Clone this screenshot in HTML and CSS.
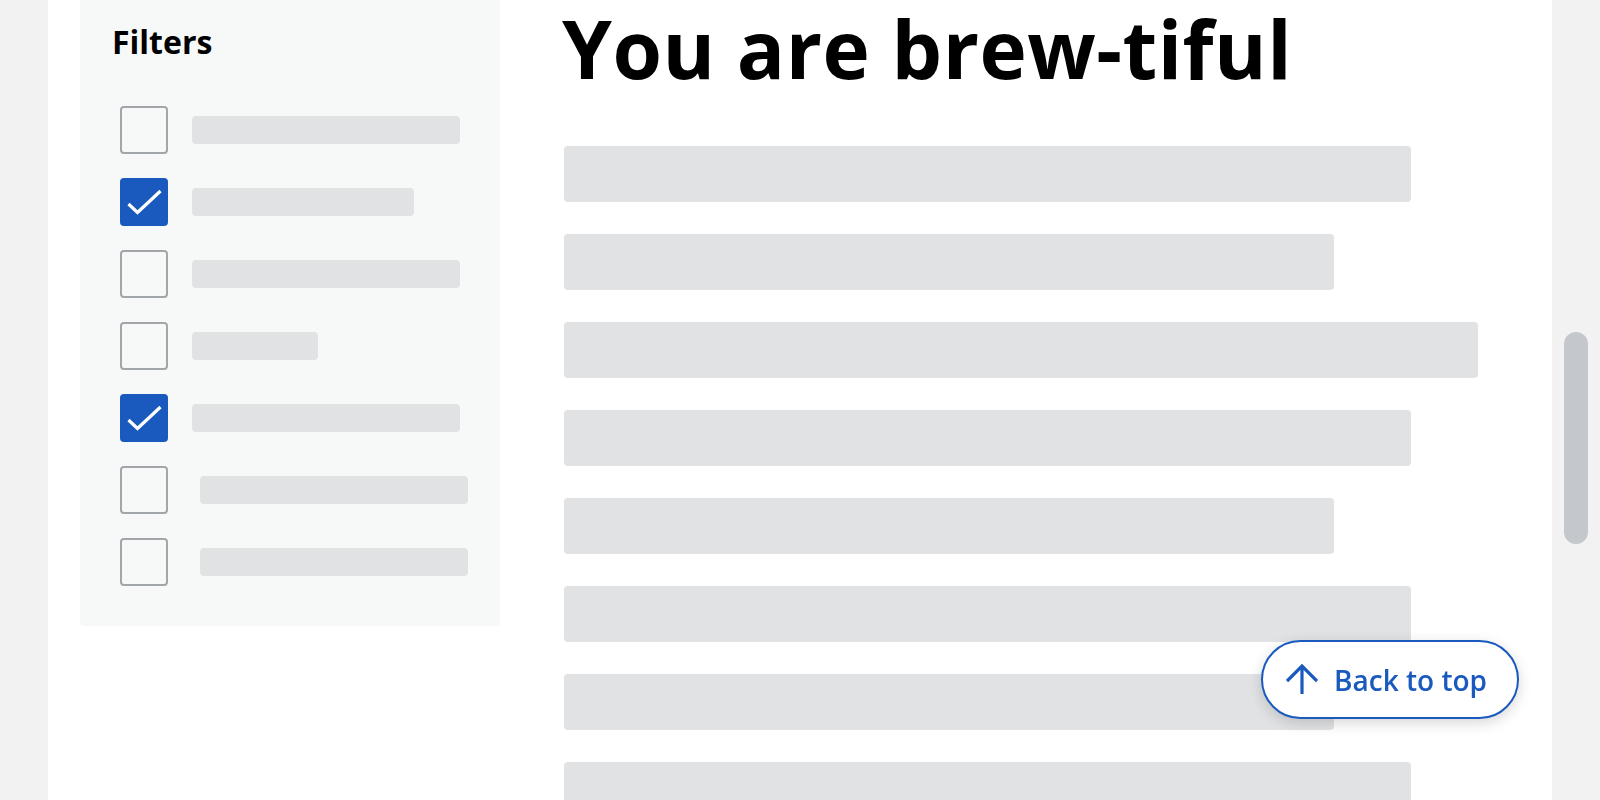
FILE: index.html
```html
<!DOCTYPE html>
<html lang="en">
<head>
<meta charset="utf-8">
<title>You are brew-tiful</title>
<link rel="stylesheet" href="styles.css">
</head>
<body>
<div class="page">
  <aside class="sidebar">
    <h2 class="sidebar-title">Filters</h2>
    <ul class="filter-list">
      <li class="filter"><span class="box"></span><span class="skel skel-long"></span></li>
      <li class="filter"><span class="box box-checked"><svg viewBox="0 0 48 48" width="48" height="48"><path d="M8.5 26 L17.5 34.5 L40.5 13" fill="none" stroke="#fff" stroke-width="3.2"/></svg></span><span class="skel skel-mid"></span></li>
      <li class="filter"><span class="box"></span><span class="skel skel-long"></span></li>
      <li class="filter"><span class="box"></span><span class="skel skel-short"></span></li>
      <li class="filter"><span class="box box-checked"><svg viewBox="0 0 48 48" width="48" height="48"><path d="M8.5 26 L17.5 34.5 L40.5 13" fill="none" stroke="#fff" stroke-width="3.2"/></svg></span><span class="skel skel-long"></span></li>
      <li class="filter"><span class="box"></span><span class="skel skel-long skel-shift"></span></li>
      <li class="filter"><span class="box"></span><span class="skel skel-long skel-shift"></span></li>
    </ul>
  </aside>
  <main class="content">
    <h1 class="title">You are brew-tiful</h1>
    <div class="lines">
      <div class="line line-a"></div>
      <div class="line line-b"></div>
      <div class="line line-c"></div>
      <div class="line line-a"></div>
      <div class="line line-b"></div>
      <div class="line line-a"></div>
      <div class="line line-b"></div>
      <div class="line line-a"></div>
    </div>
  </main>
</div>
<button class="back-to-top" type="button">
  <svg class="back-icon" viewBox="0 0 32 32" width="32" height="32"><path d="M16 30 V2 M1 17 L16 2 L31 17" fill="none" stroke="currentColor" stroke-width="3.2"/></svg>
  <span>Back to top</span>
</button>
<div class="scroll-thumb"></div>
</body>
</html>
```
FILE: styles.css
```css
html, body {
  margin: 0;
  padding: 0;
  height: 100%;
  overflow: hidden;
}
body {
  background: #f2f2f2;
  font-family: "Open Sans", "Noto Sans", sans-serif;
  color: #000;
}
.page {
  margin: 0 48px;
  background: #fff;
  height: 800px;
  display: flex;
  align-items: flex-start;
  overflow: hidden;
}
.sidebar {
  margin-left: 32px;
  width: 420px;
  flex: none;
  box-sizing: border-box;
  background: #f7f9f9;
  padding: 22px 32px 40px 32px;
  border-radius: 0 0 4px 4px;
}
.sidebar-title {
  margin: 0 0 44px 0;
  font-size: 32px;
  line-height: 40px;
  font-weight: 700;
}
.filter-list {
  list-style: none;
  margin: 0;
  padding: 0 0 0 8px;
  display: flex;
  flex-direction: column;
  gap: 24px;
}
.filter {
  display: flex;
  align-items: center;
  gap: 24px;
  height: 48px;
}
.box {
  width: 48px;
  height: 48px;
  box-sizing: border-box;
  border: 2px solid #a1a6ab;
  border-radius: 4px;
  flex: none;
  display: block;
}
.box-checked {
  background: #1a59be;
  border-color: #1a59be;
  position: relative;
}
.box-checked svg {
  position: absolute;
  left: -2px;
  top: -2px;
}
.skel {
  display: block;
  height: 28px;
  background: #e1e2e4;
  border-radius: 4px;
}
.skel-long { width: 268px; }
.skel-mid { width: 222px; }
.skel-short { width: 126px; }
.skel-shift { margin-left: 8px; }

.content {
  margin-left: 64px;
  flex: 1;
}
.title {
  margin: 2px 0 52px -2px;
  font-size: 80px;
  line-height: 92px;
  font-weight: 700;
  letter-spacing: 0.5px;
}
.lines {
  display: flex;
  flex-direction: column;
  gap: 32px;
}
.line {
  height: 56px;
  background: #e1e2e4;
  border-radius: 4px;
}
.line-a { width: 847px; }
.line-b { width: 770px; }
.line-c { width: 914px; }

.back-to-top {
  position: fixed;
  right: 81px;
  bottom: 81px;
  height: 79px;
  box-sizing: border-box;
  display: flex;
  align-items: center;
  gap: 16px;
  padding: 0 30px 0 23px;
  background: #fff;
  border: 2px solid #1a59be;
  border-radius: 40px;
  color: #1a59be;
  font-family: "Open Sans", "Noto Sans", sans-serif;
  font-size: 28px;
  font-weight: 600;
  box-shadow: 0 4px 14px rgba(0, 0, 0, 0.16);
  cursor: pointer;
}
.back-icon {
  width: 32px;
  height: 32px;
  flex: none;
}
.scroll-thumb {
  position: fixed;
  right: 12px;
  top: 332px;
  width: 24px;
  height: 212px;
  border-radius: 12px;
  background: #c4c7cb;
}
```
